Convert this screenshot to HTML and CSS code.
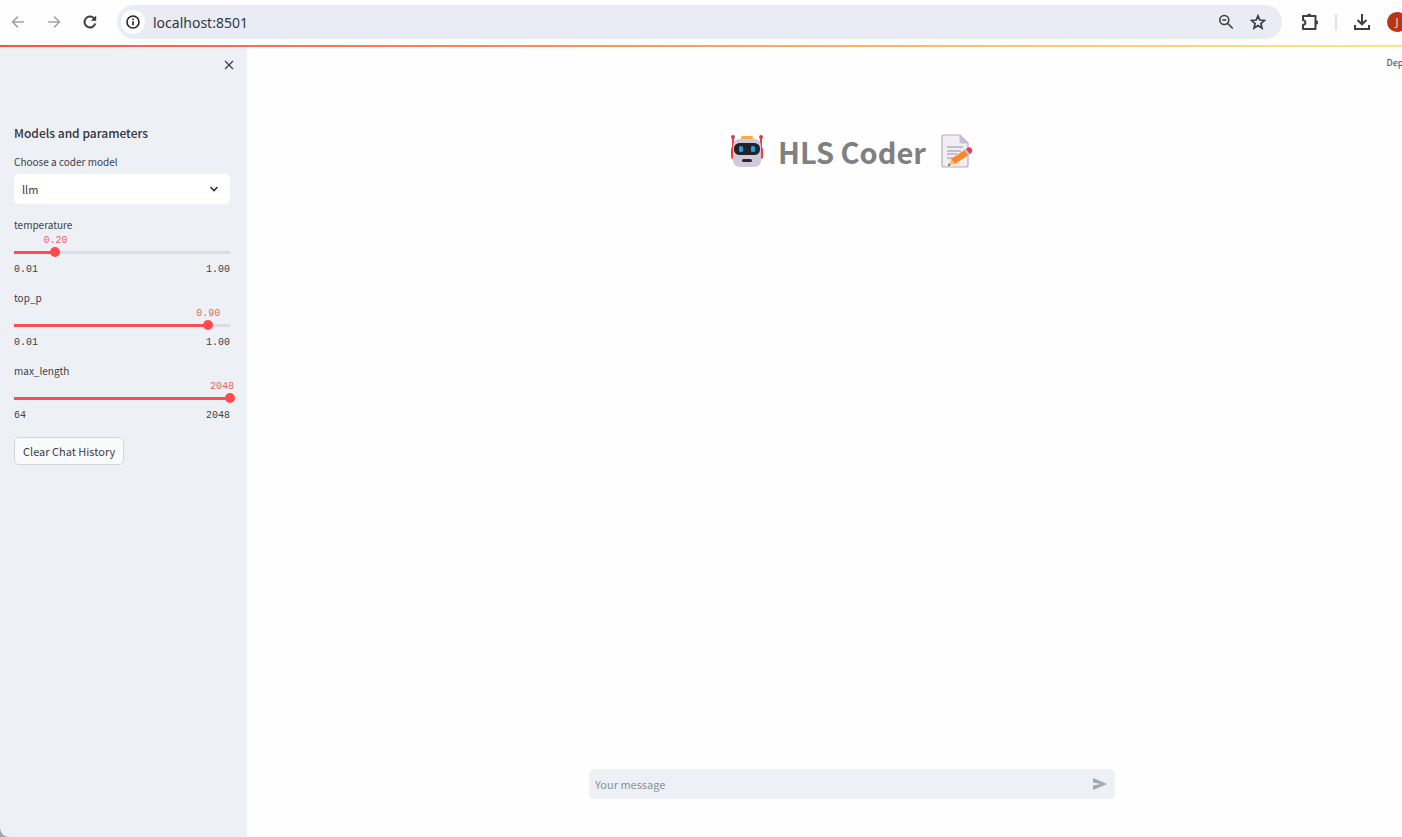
FILE: index.html
```html
<!DOCTYPE html>
<html lang="en">
<head>
<meta charset="utf-8">
<title>HLS Coder</title>
<link rel="stylesheet" href="styles.css">
</head>
<body>
<div class="window">
  <header class="toolbar">
    <nav class="nav">
      <button class="icon-btn dim" aria-label="Back"><svg width="16" height="16" viewBox="0 0 16 16"><path d="M14 8H3M8 2.500 2.500 8 8 13.500"/></svg></button>
      <button class="icon-btn dim" aria-label="Forward"><svg width="16" height="16" viewBox="0 0 16 16"><path d="M2 8h11M8 2.500 13.500 8 8 13.500"/></svg></button>
      <button class="icon-btn" aria-label="Reload"><svg width="16" height="16" viewBox="0 0 16 16"><path d="M13.300 9.500A5.500 5.500 0 1 1 12 4.200l1.500 1.600" stroke-width="2"/><path d="M14.200 1.500v5.300H8.900z" fill="currentColor" stroke="none"/></svg></button>
    </nav>
    <div class="omnibox">
      <button class="site-info" aria-label="Site information"><svg width="16" height="16" viewBox="0 0 16 16"><circle cx="8" cy="8" r="6"/><path d="M8 7.200v4M8 4.400v1.600"/></svg></button>
      <input class="url" type="text" value="localhost:8501" aria-label="Address">
      <button class="icon-btn" aria-label="Zoom"><svg width="16" height="16" viewBox="0 0 16 16"><circle cx="6.300" cy="6" r="4.500"/><path d="M4.300 6h4M9.500 9.200l5.200 5.300" /></svg></button>
      <button class="icon-btn" aria-label="Bookmark"><svg width="16" height="16" viewBox="0 0 16 16"><path d="M8 1.800 9.800 6l4.700.4-3.600 3.100 1.100 4.600L8 11.600l-4 2.500 1.100-4.600L1.500 6.400 6.200 6z" stroke-width="1.700"/></svg></button>
    </div>
    <div class="actions">
      <button class="icon-btn" aria-label="Extensions"><svg width="18" height="18" viewBox="0 0 18 18"><path d="M2 3h12.500v13H2v-4.200c3.200 0 3.200-4.600 0-4.600z" stroke-width="2" stroke-linejoin="round"/><path d="M6.200 2.500a2 2 0 0 1 4 0zM15 7.200a2.200 2.200 0 0 1 0 4.400z" fill="currentColor" stroke="none"/></svg></button>
      <span class="divider"></span>
      <button class="icon-btn" aria-label="Downloads"><svg width="18" height="18" viewBox="0 0 18 18"><path d="M9 1v10M4.500 7 9 11.300 13.500 7M2 12v4h14v-4" stroke-width="2"/></svg></button>
      <button class="avatar" aria-label="Profile">J</button>
    </div>
  </header>
  <div class="accent"></div>
  <div class="app">
    <aside class="sidebar">
      <button class="close" aria-label="Close sidebar"><svg width="10" height="10" viewBox="0 0 10 10"><path d="M1 1l8 8M9 1 1 9" stroke-width="1.300"/></svg></button>
      <h2 class="heading">Models and parameters</h2>
      <label class="label" for="model">Choose a coder model</label>
      <div class="select-box">
        <select id="model" class="select"><option>llm</option></select>
        <svg class="chevron" width="10" height="8" viewBox="0 0 10 8"><path d="M1.500 2 5 5.500 8.500 2"/></svg>
      </div>
      <div class="slider" style="--fill:.192">
        <label class="label" for="temp">temperature</label>
        <output class="value" for="temp">0.20</output>
        <input id="temp" class="range" type="range" min="0.01" max="1" step="0.01" value="0.2">
        <div class="limits"><span>0.01</span><span>1.00</span></div>
      </div>
      <div class="slider" style="--fill:.899">
        <label class="label" for="topp">top_p</label>
        <output class="value" for="topp">0.90</output>
        <input id="topp" class="range" type="range" min="0.01" max="1" step="0.01" value="0.9">
        <div class="limits"><span>0.01</span><span>1.00</span></div>
      </div>
      <div class="slider" style="--fill:1">
        <label class="label" for="maxlen">max_length</label>
        <output class="value" for="maxlen">2048</output>
        <input id="maxlen" class="range" type="range" min="64" max="2048" step="8" value="2048">
        <div class="limits"><span>64</span><span>2048</span></div>
      </div>
      <button class="clear">Clear Chat History</button>
    </aside>
    <main class="main">
      <div class="app-bar"><button class="deploy">Deploy</button></div>
      <h1 class="title">
        <svg width="34" height="34" viewBox="0 0 34 34" aria-hidden="true">
          <path d="M3 4v19M31 4v19" stroke="#ef3e45" stroke-width="2"/>
          <circle cx="3" cy="3" r="2" fill="#d93a43"/><circle cx="31" cy="3" r="2" fill="#d93a43"/>
          <rect x="1" y="13" width="4" height="12" rx="2" fill="#ef3e45"/><rect x="29" y="13" width="4" height="12" rx="2" fill="#ef3e45"/>
          <rect x="11" y="2" width="12" height="5" rx="1.500" fill="#f9ab3c"/>
          <path d="M9 5h16q6 1 6 7v14q0 7-7 7H10q-7 0-7-7V12q0-6 6-7z" fill="#cfc9da"/>
          <rect x="4" y="9" width="26" height="12" rx="5.500" fill="#252329"/>
          <rect x="9" y="12" width="4" height="6" rx="1.500" fill="#1ba3e2"/><rect x="21" y="12" width="4" height="6" rx="1.500" fill="#1ba3e2"/>
          <rect x="12" y="25" width="10" height="3" rx="1.500" fill="#29252d"/>
        </svg>
        <span>HLS Coder</span>
        <svg width="34" height="34" viewBox="0 0 34 34" aria-hidden="true">
          <path d="M4 1h16l8 8v22q0 2-2 2H4q-2 0-2-2V3q0-2 2-2z" fill="#f1edf5" stroke="#b4abc0" stroke-width="1.200"/>
          <path d="M19.500 1 28 9.500h-6q-2.500 0-2.500-2.500z" fill="#c8c0d3"/>
          <path d="M7 13h16M7 17h14M7 20h10M7 24h7" stroke="#9992a5" stroke-width="1.200"/>
          <path d="M8 32l3-7 4 5z" fill="#fbc475"/><path d="M8 32l1-2.500 1.300 1.600z" fill="#333"/>
          <path d="M11 25l15-10 4 5-15 10z" fill="#ff8727"/>
          <path d="M24 16.300l2-1.400 4 5-2 1.400z" fill="#c9bfd0"/>
          <path d="M26 15l2-1.400q2-1 3.500 1t0 3.900L30 20z" fill="#f83161"/>
        </svg>
      </h1>
      <form class="chat">
        <input class="message" type="text" placeholder="Your message" aria-label="Your message">
        <button class="send" type="button" aria-label="Send"><svg width="14" height="12" viewBox="0 0 14 12"><path d="M0 0l14 6L0 12V7.500L8 6 0 4.500z" fill="#a1a6b0"/></svg></button>
      </form>
    </main>
  </div>
</div>
</body>
</html>
```
FILE: styles.css
```css
* { box-sizing: border-box; }
body { margin: 0; background: #fefefe; color: #3c3f49; font-family: "Noto Sans CJK JP", "Open Sans", sans-serif; }
button, input, select { margin: 0; padding: 0; border: 0; background: none; color: inherit; font: inherit; }
button, svg { display: block; }
svg { fill: none; stroke: currentColor; stroke-width: 1.6px; flex: none; }
svg [fill]:not([stroke]) { stroke: none; }
.window { display: flex; flex-direction: column; height: 100vh; overflow: hidden; }

.toolbar { display: flex; align-items: center; flex: none; height: 45px; padding: 0 0 1px 10px; color: #3d3f42; }
.nav { display: flex; gap: 20px; margin-right: 19px; }
.dim { color: #a2a4a7; }
.omnibox { display: flex; align-items: center; flex: 1; gap: 16px; height: 34px; padding: 0 16px 0 4px; border-radius: 17px; background: #e9ecf4; }
.site-info { display: grid; place-items: center; width: 24px; height: 24px; border-radius: 50%; background: #fff; color: #222427; }
.url { flex: 1; min-width: 0; margin-left: -8px; font: 14px "Noto Sans", sans-serif; color: #35373b; }
.actions { display: flex; align-items: center; gap: 16px; margin: 0 -6px 0 18px; }
.divider { width: 2px; height: 16px; background: #d5e3f5; }
.actions { margin: 0 -5px 0 19px; }
.avatar { width: 20px; height: 20px; border-radius: 50%; background: #ba3511; color: #f9ddd3; font: 11px/20px "Noto Sans", sans-serif; }
.accent { flex: none; height: 2px; background: linear-gradient(90deg, #f95252, #ff8b5f 40%, #fbc96b 75%, #fbe97a); }

.app { display: flex; flex: 1; min-height: 0; background: #a3a6a8; }
.sidebar { flex: none; width: 247px; padding: 12px 17px 0 14px; border-bottom-left-radius: 9px; background: #edf0f5; }
.close { margin: 0 -5px 0 auto; padding: 1px; }
.heading { margin: 52px 0 12px; color: #31333f; font-size: 12px; line-height: 20px; font-weight: 500; }
.label { display: block; font-size: 10px; line-height: 14px; }
.select-box { position: relative; margin: 5px 0 14px; }
.select { width: 100%; height: 30px; padding: 0 8px; border-radius: 5px; appearance: none; background: #fff; font-size: 11px; }
.chevron { position: absolute; top: 11px; right: 11px; color: #31333f; pointer-events: none; }
.slider { margin-bottom: 14px; font-size: 10px; }
.value { display: block; width: 25px; margin-left: min(calc(100% * var(--fill) - 12px), calc(100% - 20px)); padding-top: 1px; color: #ef6262; font-family: "Liberation Mono", monospace; line-height: 16px; }
.range { display: block; width: calc(100% + 10px); height: 10px; margin: -2px -5px 0; appearance: none;
  background:
    linear-gradient(#fb4e4e, #fb4e4e) 5px center / calc((100% - 10px) * var(--fill)) 3px no-repeat,
    linear-gradient(#d9dde5, #d9dde5) 5px center / calc(100% - 10px) 3px no-repeat; }
.range::-webkit-slider-thumb { width: 10px; height: 10px; border-radius: 50%; appearance: none; background: #ff4b4b; }
.limits { display: flex; justify-content: space-between; padding-top: 5px; font-family: "Liberation Mono", monospace; line-height: 15px; }
.clear { height: 28px; padding: 0 8px; border: 1px solid #d3d6dc; border-radius: 5px; background: #f9fafc; font-size: 11px; line-height: 26px; }

.main { display: flex; flex-direction: column; flex: 1; align-items: center; min-width: 0; margin-right: -55px; background: #fefefe; }
.app-bar { align-self: stretch; display: flex; justify-content: flex-end; padding: 9px 41px 0 0; }
.deploy { font-size: 9px; line-height: 14px; }
.title { display: flex; align-items: center; gap: 14px; margin: 57px 0 0; color: #808080; font-size: 29px; line-height: 48px; font-weight: 700; }
.chat { display: flex; align-items: center; width: 526px; height: 30px; margin: auto 0 38px; padding: 0 8px 0 6px; border-radius: 5px; background: #edf0f5; }
.message { flex: 1; font-size: 11px; }
.message::placeholder { color: #8c9098; }
```
